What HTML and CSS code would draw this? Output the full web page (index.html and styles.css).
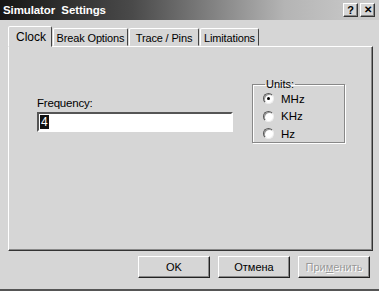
FILE: index.html
```html
<!DOCTYPE html>
<html>
<head>
<meta charset="utf-8">
<link rel="stylesheet" href="styles.css">
</head>
<body>
<div class="window">
  <div class="titlebar">
    <span class="title">Simulator&nbsp; Settings</span>
    <div class="tbtns">
      <span class="tbtn">?</span>
      <span class="tbtn x">✕</span>
    </div>
  </div>
  <div class="body">
    <div class="tabs">
      <div class="tab active">Clock</div>
      <div class="tab">Break Options</div>
      <div class="tab">Trace / Pins</div>
      <div class="tab">Limitations</div>
    </div>
    <div class="panel">
      <div class="freq">
        <div class="label">Frequency:</div>
        <div class="input"><span class="sel">4</span></div>
      </div>
      <fieldset class="units">
        <legend>Units:</legend>
        <div class="radio"><span class="dot on"></span>MHz</div>
        <div class="radio"><span class="dot"></span>KHz</div>
        <div class="radio"><span class="dot"></span>Hz</div>
      </fieldset>
    </div>
    <div class="buttons">
      <div class="btn">OK</div>
      <div class="btn">Отмена</div>
      <div class="btn disabled">При<u>м</u>енить</div>
    </div>
  </div>
</div>
</body>
</html>
```
FILE: styles.css
```css
html, body { margin: 0; padding: 0; }
body {
  width: 379px; height: 291px; overflow: hidden;
  font-family: "Liberation Sans", Arial, sans-serif;
  font-size: 11px; color: #000;
  background: #d6d6d6;
}
.window {
  width: 379px; height: 291px; box-sizing: border-box;
  background: #d6d6d6;
  border-bottom: 2px solid #555;
  display: flex; flex-direction: column;
}
.titlebar {
  height: 20px; flex: none;
  background: linear-gradient(to right, #161616 0%, #4a4a4a 35%, #b4b4b4 75%, #cdcdcd 100%);
  display: flex; align-items: center; justify-content: space-between;
  padding: 0 4px 0 3px;
}
.title { color: #fff; font-weight: bold; font-size: 11.5px; letter-spacing: -0.1px; }
.tbtns { display: flex; gap: 2px; }
.tbtn {
  width: 15px; height: 14px; box-sizing: border-box;
  background: #d6d6d6;
  border: 1px solid; border-color: #fff #333 #333 #fff;
  box-shadow: inset -1px -1px 0 #888;
  font-weight: bold; font-size: 11px; line-height: 12px; text-align: center;
}
.tbtn.x { font-size: 10px; }
.body { flex: 1; display: flex; flex-direction: column; padding: 5px 6px 0 8px; }
.tabs { display: flex; align-items: flex-end; height: 21px; }
.tab {
  height: 18px; box-sizing: border-box;
  border: 1px solid; border-color: #fff #444 transparent #fff;
  border-radius: 2px 2px 0 0;
  padding: 1px 0 0 0; margin-right: 1px;
  font-size: 11px; letter-spacing: -0.15px; line-height: 16px; white-space: nowrap;
  text-align: center;
  position: relative;
}
.tab:nth-child(2) { width: 75px; }
.tab:nth-child(3) { width: 70px; }
.tab:nth-child(4) { width: 59px; }
.tab.active {
  height: 21px; width: 44px; padding: 2px 0 0 2px;
  margin-bottom: -1px; background: #d6d6d6; z-index: 1;
  font-size: 12px; letter-spacing: 0;
}
.panel {
  height: 205px; box-sizing: border-box;
  border: 1px solid; border-color: #fff #333 #333 #fff;
  box-shadow: inset -1px -1px 0 #888;
  display: flex; align-items: flex-start;
  padding: 32px 0 0 28px;
}
.freq { margin-top: 18px; width: 196px; }
.label { font-size: 11.5px; margin-bottom: 3px; letter-spacing: -0.2px; }
.input {
  height: 20px; box-sizing: border-box; background: #fff;
  border: 2px solid; border-color: #555 #fff #fff #555;
  padding: 1px 1px 0 1px;
  font-size: 12px; line-height: 14px;
}
.sel { background: #111; color: #fff; padding: 0 1px; }
.units {
  margin: 0 0 0 19px; width: 93px; height: 64px; box-sizing: border-box;
  border: 1px solid #888; box-shadow: 1px 1px 0 #fff, inset 1px 1px 0 #fff;
  padding: 1px 0 0 10px;
}
.units legend { padding: 0 1px; margin-left: 2px; font-size: 11px; line-height: 10px; }
.radio { display: flex; align-items: center; height: 17.5px; font-size: 11.5px; }
.dot {
  width: 11px; height: 11px; box-sizing: border-box; border-radius: 50%;
  background: #fff; border: 1px solid; border-color: #555 #eee #eee #555;
  box-shadow: inset 1px 1px 0 #999;
  margin-right: 7px; position: relative;
}
.dot.on::after {
  content: ""; position: absolute; left: 3px; top: 3px;
  width: 3px; height: 3px; border-radius: 50%; background: #000;
}
.buttons { display: flex; justify-content: flex-end; gap: 8px; margin-top: 5px; padding-right: 3px; }
.btn {
  width: 72px; height: 22px; box-sizing: border-box;
  border: 1px solid; border-color: #fff #222 #222 #fff;
  box-shadow: inset -1px -1px 0 #888;
  display: flex; align-items: center; justify-content: center;
  font-size: 11px;
}
.btn.disabled { color: #999; text-shadow: 1px 1px 0 #fff; }
```
